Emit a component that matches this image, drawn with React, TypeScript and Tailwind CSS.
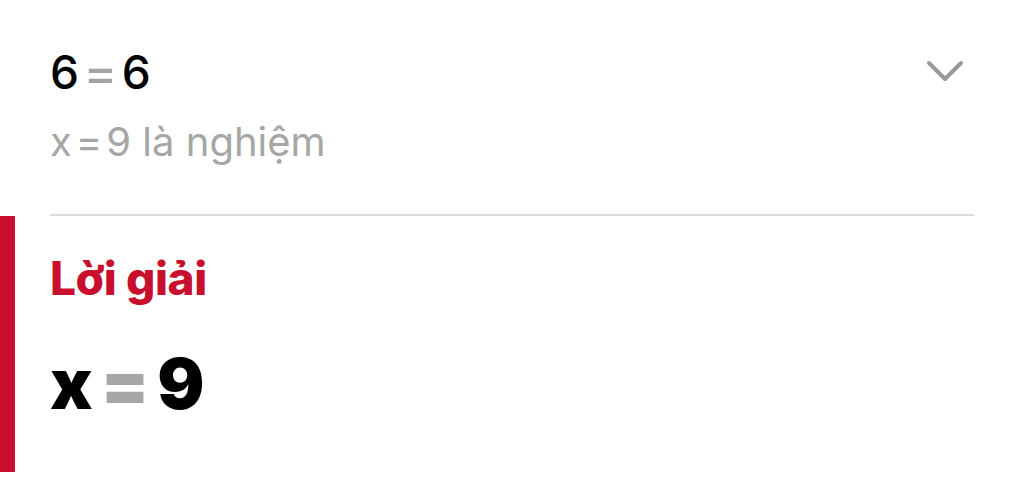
// Solution card: the checked equation up top, then the highlighted answer block.
export default function App() {
  return (
    <div className="w-[1024px] h-[480px] bg-white overflow-hidden font-['Inter','Noto_Sans',sans-serif]">
      {/* Verification block */}
      <div className="pl-[50px] pr-[50px] pt-[44px]">
        <div className="flex items-start justify-between">
          <p className="text-[46px] leading-[56px] font-medium text-black flex">
            <span>6</span>
            <span className="text-[#a3a3a3] mx-[6px] scale-x-[1.1]">=</span>
            <span>6</span>
          </p>
          {/* chevron */}
          <svg width="38" height="24" viewBox="0 0 38 24" className="mt-[16px] mr-[10px]">
            <polyline
              points="3,3 19,19 35,3"
              fill="none"
              stroke="#999999"
              strokeWidth="4"
              strokeLinecap="round"
              strokeLinejoin="round"
            />
          </svg>
        </div>
        <p className="mt-[17px] text-[40px] leading-[50px] text-[#a6a6a6] flex">
          <span>x</span>
          <span className="mx-[4px]">=</span>
          <span>9 là nghiệm</span>
        </p>
        <div className="mt-[47px] h-[2px] bg-[#dcdcdc]" />
      </div>

      {/* Answer block with accent bar */}
      <div className="flex h-[256px]">
        <div className="w-[15px] bg-[#c8102e]" />
        <div className="pl-[35px] pt-[34px]">
          <p className="text-[46px] leading-[56px] font-extrabold text-[#c8102e] tracking-[-0.4px]">
            Lời giải
          </p>
          <p className="mt-[38px] text-[70px] leading-[80px] font-black text-black flex">
            <span>x</span>
            <span className="text-[#a6a6a6] mx-[8px]">=</span>
            <span>9</span>
          </p>
        </div>
      </div>
    </div>
  );
}
